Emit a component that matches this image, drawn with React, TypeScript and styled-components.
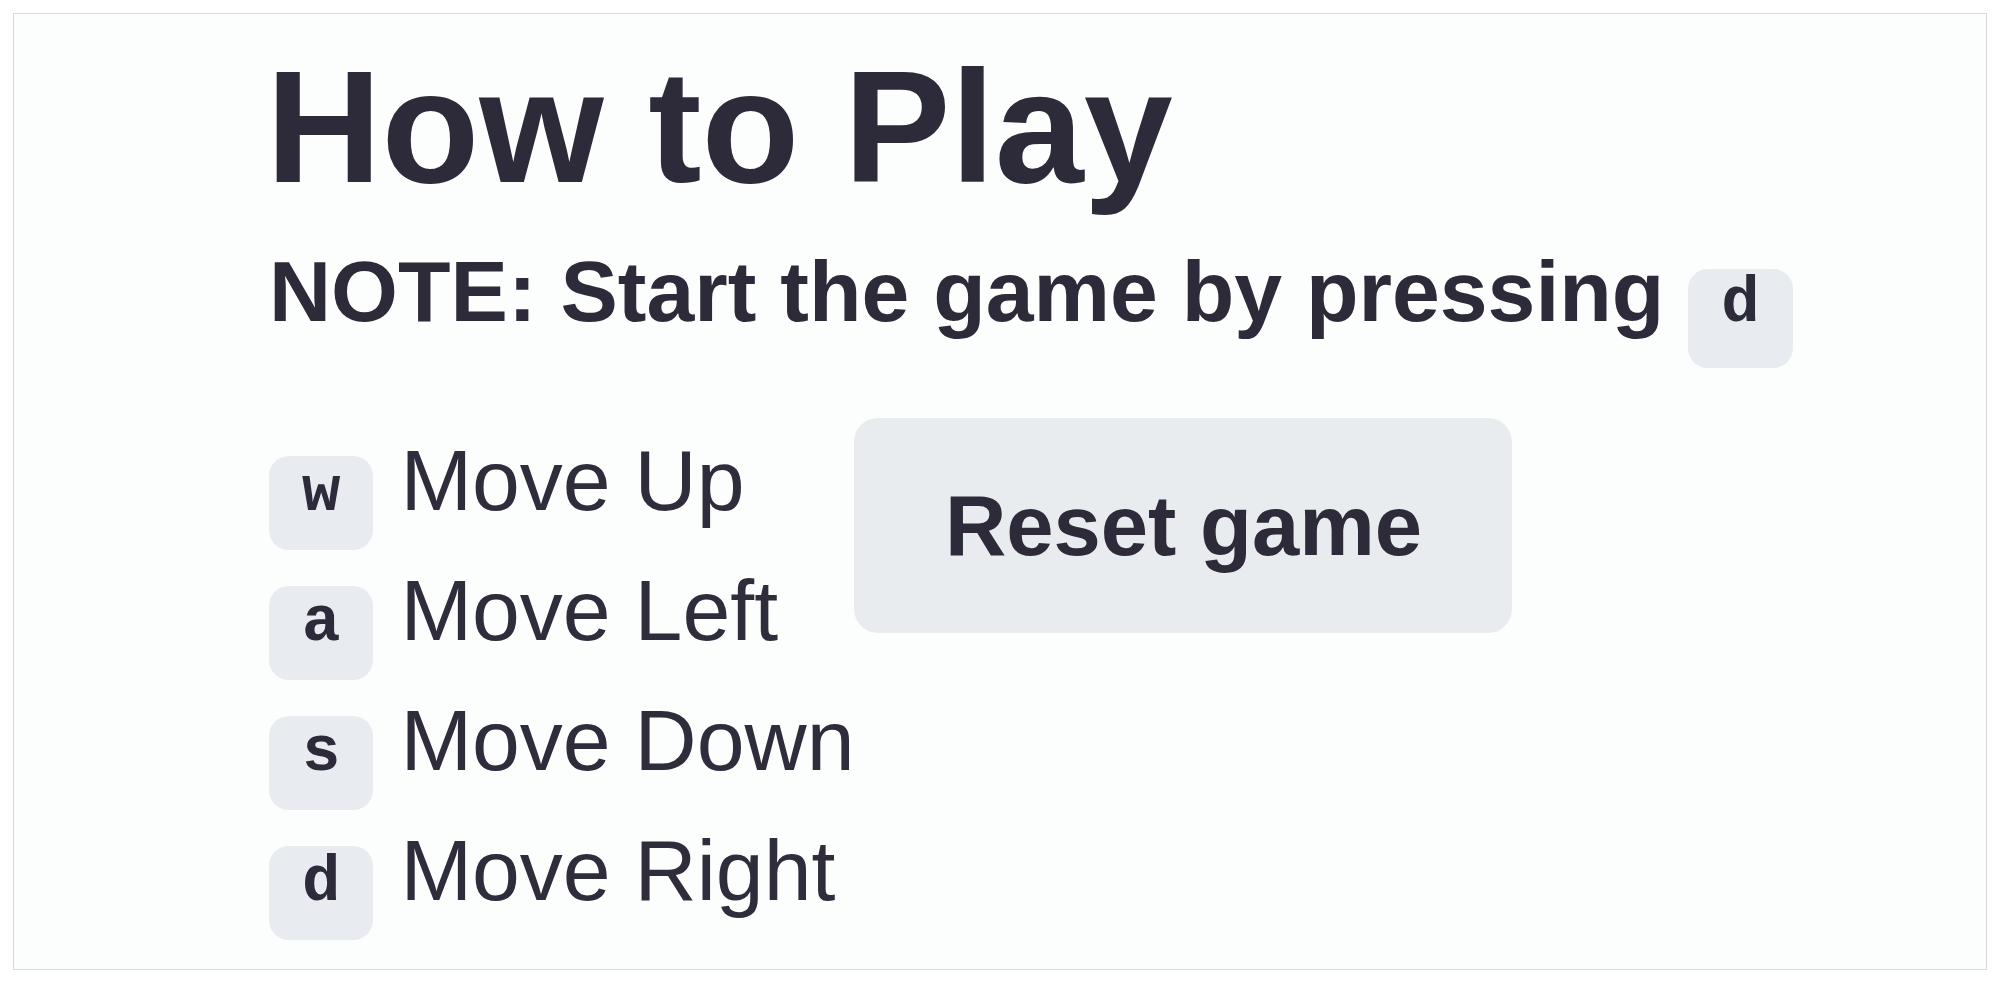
import React from "react";
import styled, { createGlobalStyle } from "styled-components";

const Global = createGlobalStyle`
  html, body {
    margin: 0;
    padding: 0;
    background: #ffffff;
  }
  body {
    font-family: "Liberation Sans", Arial, sans-serif;
    color: #2d2b39;
  }
`;

const Frame = styled.div`
  box-sizing: border-box;
  margin: 13px;
  height: 957px;
  border: 1px solid #d5d8dc;
  background: #fcfdfd;
  padding: 33px 0 0 255px;
  overflow: hidden;
`;

const Title = styled.h1`
  margin: 0 0 0 -3px;
  font-family: "Liberation Sans", Arial, sans-serif;
  font-weight: 700;
  font-size: 160px;
  line-height: 160px;
  color: #2d2b39;
`;

const Note = styled.h3`
  margin: 34px 0 0 0;
  font-family: "Liberation Sans", Arial, sans-serif;
  font-weight: 700;
  font-size: 86px;
  line-height: 100px;
  color: #2d2b39;
  white-space: nowrap;
`;

const Key = styled.kbd<{ $tall?: boolean }>`
  display: inline-block;
  font-family: "Liberation Mono", "Courier New", monospace;
  font-weight: 700;
  font-size: 64px;
  line-height: 66px;
  padding: ${(p) => (p.$tall ? "2px 33px 31px" : "4px 33px 24px")};
  background: #e8ebef;
  border-radius: 20px;
  color: #2d2b39;
`;

const Section = styled.div`
  display: flex;
  flex-direction: row;
  align-items: flex-start;
  gap: 0;
  margin-top: 50px;
`;

const List = styled.ul`
  list-style: none;
  margin: 0;
  padding: 13px 0 0 0;
  display: flex;
  flex-direction: column;
`;

const Row = styled.li`
  display: flex;
  align-items: baseline;
  gap: 27px;
  height: 130px;
  font-family: "Liberation Sans", Arial, sans-serif;
  font-size: 86px;
  font-weight: 400;
  color: #2f2d3c;
  white-space: nowrap;
`;

const Label = styled.span`
  line-height: normal;
`;

const ResetButton = styled.button`
  box-sizing: border-box;
  width: 658px;
  height: 215px;
  border: none;
  border-radius: 24px;
  background: #e9ecef;
  font-family: "Liberation Sans", Arial, sans-serif;
  font-weight: 700;
  font-size: 85px;
  color: #2d2b39;
  cursor: pointer;
  padding: 0;
`;

const controls = [
  { key: "w", label: "Move Up" },
  { key: "a", label: "Move Left" },
  { key: "s", label: "Move Down" },
  { key: "d", label: "Move Right" },
];

export default function App() {
  return (
    <>
      <Global />
      <Frame>
        <Title>How to Play</Title>
        <Note>
          NOTE: Start the game by pressing <Key $tall>d</Key>
        </Note>
        <Section>
          <List>
            {controls.map((c) => (
              <Row key={c.key}>
                <Key>{c.key}</Key>
                <Label>{c.label}</Label>
              </Row>
            ))}
          </List>
          <ResetButton>Reset game</ResetButton>
        </Section>
      </Frame>
    </>
  );
}
